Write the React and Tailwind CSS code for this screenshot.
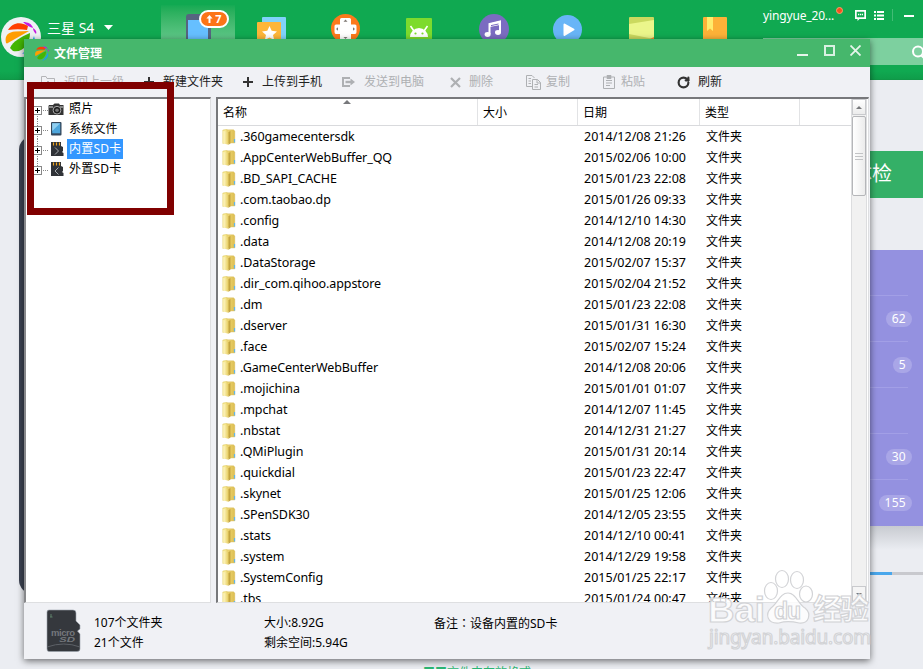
import { RotateCw } from 'lucide-react'

const FILES = [
  ['.360gamecentersdk', '2014/12/08 21:26'],
  ['.AppCenterWebBuffer_QQ', '2015/02/06 10:00'],
  ['.BD_SAPI_CACHE', '2015/01/23 22:08'],
  ['.com.taobao.dp', '2015/01/26 09:33'],
  ['.config', '2014/12/10 14:30'],
  ['.data', '2014/12/08 20:19'],
  ['.DataStorage', '2015/02/07 15:37'],
  ['.dir_com.qihoo.appstore', '2015/02/04 21:52'],
  ['.dm', '2015/01/23 22:08'],
  ['.dserver', '2015/01/31 16:30'],
  ['.face', '2015/02/07 15:24'],
  ['.GameCenterWebBuffer', '2014/12/08 20:06'],
  ['.mojichina', '2015/01/01 01:07'],
  ['.mpchat', '2014/12/07 11:45'],
  ['.nbstat', '2014/12/31 21:27'],
  ['.QMiPlugin', '2015/01/31 20:14'],
  ['.quickdial', '2015/01/23 22:47'],
  ['.skynet', '2015/01/25 12:06'],
  ['.SPenSDK30', '2014/12/05 23:55'],
  ['.stats', '2014/12/10 00:41'],
  ['.system', '2014/12/29 19:58'],
  ['.SystemConfig', '2015/01/25 22:17'],
  ['.tbs', '2015/01/24 00:47'],
]

function Logo({ className }) {
  return (
    <svg className={className} viewBox="0 0 40 40">
      <path d="M7 13 C11 6 19 4 27 9 L26 13 C20 12 14 12 7 13Z" fill="#ff3d00" />
      <path d="M5 26 C3 18 8 15 14 14.500 L28 14 L6 26.500Z" fill="#ff9d00" />
      <path d="M9 31 C12 24 20 20 29 16 C29 27 22 36 12 34Z" fill="#43b604" />
      <path d="M22 5 C27 5 31 7 32 11 C28 10 25 8 22 5Z M32 11 C35 13 36 15 35 17 C33 15 32 13 32 11Z" fill="#c51ae0" />
      <path d="M33 19 C36 27 30 35 21 37 C28 31 31 26 33 19Z" fill="#159cf8" />
    </svg>
  )
}

function Folder() {
  return (
    <svg className="h-4 w-[18px] shrink-0" viewBox="0 0 18 16">
      <defs>
        <linearGradient id="fold" x1="0" x2="1">
          <stop offset="0" stopColor="#fff8c8" />
          <stop offset="1" stopColor="#e6cc5c" />
        </linearGradient>
        <linearGradient id="foldBack" x1="0" x2="1">
          <stop offset="0" stopColor="#f0d977" />
          <stop offset="1" stopColor="#dcbd50" />
        </linearGradient>
      </defs>
      <path d="M.8 1 L5 .3 V13.500 L.8 14.500Z" fill="#f6e78d" stroke="#e0ca68" strokeWidth=".5" />
      <path d="M5 .8 H11.500 L12.800 2 V14 H5Z" fill="url(#foldBack)" stroke="#d8bd5c" strokeWidth=".4" />
      <path d="M1.500 2 L6.500 3 V15.700 L1.500 14.500Z" fill="url(#fold)" />
      <path d="M6.500 3 L8.500 2 V14.500 L6.500 15.700Z" fill="#c3a440" />
      <path d="M12.500 10 V13.500" stroke="#60b6ed" strokeWidth="1.200" />
    </svg>
  )
}

function Phone() {
  return (
    <>
      <svg className="h-[25px] w-[25px]" viewBox="0 0 25 25">
        <rect width="25" height="34" rx="3" fill="#566580" />
        <rect x="2" y="6" width="20" height="24" fill="#66bfff" />
      </svg>
      <span className="absolute left-[38px] top-[5px] flex h-[18px] w-[30px] items-center justify-center gap-[2px] rounded-full border-2 border-white bg-[#fc7418] text-[11px] font-bold text-white">
        <svg className="h-[8px] w-[7px]" viewBox="0 0 7 9"><path d="M3.500 0 L7 4 H4.600 V9 H2.400 V4 H0Z" fill="#fff" /></svg>
        7
      </span>
    </>
  )
}

const TABS = [
  <Phone key="phone" />,
  <svg key="star" className="mr-px h-[22px] w-[29px]" viewBox="0 0 29 22">
    <rect x="5" width="24" height="26" rx="1" fill="#80d2fa" />
    <rect y="5" width="24" height="26" rx="1" fill="#fdb639" />
    <path d="M12.500 9 L14.700 13.800 L20 14.400 L16 18 L17.200 23 L12.500 20.500 L7.800 23 L9 18 L5 14.400 L10.300 13.800Z" fill="#fff" />
  </svg>,
  <svg key="game" className="mr-[2px] h-[25px] w-[29px]" viewBox="0 0 29 25">
    <circle cx="14.500" cy="14.500" r="14.500" fill="#fd7a1b" />
    <path d="M10.500 4 H18.500 Q20 4 20 5.500 V10.500 H24 Q25.500 10.500 25.500 12 V18 Q25.500 20 24 20 H20 V26 H9 V20 H5 Q3.500 20 3.500 18 V12 Q3.500 10.500 5 10.500 H9 V5.500 Q9 4 10.500 4Z" fill="#fff" />
    <path d="M14.500 5.500 L16.500 7.800 H12.500Z M5 15 L7 13.300 V16.700Z M24 15 L22 13.300 V16.700Z M14.500 25 L12.500 23 H16.500Z" fill="#7d7772" />
  </svg>,
  <svg key="android" className="mr-[2px] h-[21px] w-[26px]" viewBox="0 0 26 21">
    <rect width="26" height="28" rx="1" fill="#7ddb2d" />
    <path d="M4 19 A9 9 0 0 1 22 19Z" fill="#fff" />
    <path d="M4.500 8 L8 13 M21.500 8 L18 13" stroke="#fff" strokeWidth="1.600" />
    <circle cx="9.500" cy="15.500" r="1.100" fill="#7ddb2d" /><circle cx="16.500" cy="15.500" r="1.100" fill="#7ddb2d" />
  </svg>,
  <svg key="music" className="h-[25px] w-[30px]" viewBox="0 0 30 25">
    <circle cx="15" cy="15" r="15" fill="#7b6cc1" />
    <path d="M10.500 20 V10 L21 7.500 V18" fill="none" stroke="#fff" strokeWidth="2" />
    <path d="M10.500 9.500 L21 7 V11 L10.500 13Z" fill="#fff" />
    <path d="M12 11.600 L19.500 10" stroke="#7b6cc1" strokeWidth="1" />
    <ellipse cx="8.600" cy="20.500" rx="3" ry="2.400" fill="#fff" /><ellipse cx="19" cy="18.500" rx="3" ry="2.400" fill="#fff" />
  </svg>,
  <svg key="video" className="mr-[2px] h-6 w-[29px]" viewBox="0 0 29 24">
    <circle cx="14.500" cy="14.500" r="14.500" fill="#68b5f7" />
    <path d="M11.500 9.500 L20.500 14.500 L11.500 20Z" fill="#fff" stroke="#fff" strokeWidth="2" strokeLinejoin="round" />
  </svg>,
  <svg key="note" className="mr-[2px] h-[22px] w-[25px]" viewBox="0 0 25 22">
    <rect width="25" height="24" rx="1" fill="#cbd95f" />
    <path d="M0 7 L25 3 V22 L20 21 L0 17Z" fill="#ebf68b" />
    <path d="M21 22 L25 20 V22Z" fill="#ef8b31" />
  </svg>,
  <svg key="book" className="mr-[2px] h-[22px] w-6" viewBox="0 0 24 22">
    <rect width="24" height="26" rx="1" fill="#fdb238" />
    <path d="M4 0 H10 V14 L7 11.500 L4 14Z" fill="#ffec6c" />
  </svg>,
]

function MainHeader() {
  return (
    <header className="relative flex h-20 border-b border-[#109747] bg-linear-to-b from-[#10a951] from-90% to-[#0f9d4a]">
      <div className="flex w-[161px] shrink-0 items-start pt-[17px] pl-px text-white">
        <div className="h-10 w-10 rounded-full bg-[#eef1f4]"><Logo className="h-10 w-10" /></div>
        <span className="ml-[6px] text-[14px] leading-[21px]">三星 S4</span>
        <svg className="mt-2 ml-[10px] h-[5px] w-[9px]" viewBox="0 0 9 5"><path d="M0 0 H9 L4.500 5Z" fill="#fff" /></svg>
      </div>
      {TABS.map((icon, i) => (
        <div
          key={i}
          className={
            i === 0
              ? 'relative mt-[5px] flex h-[34px] w-[74px] shrink-0 items-end justify-center bg-linear-to-b from-[#14aa53] to-[#5ec787]'
              : 'flex h-[39px] w-[74px] shrink-0 items-end justify-center'
          }
        >
          {icon}
        </div>
      ))}
      <div className="absolute top-[6px] left-[763px] flex items-start text-[12px] leading-5 text-white">
        <span className="w-[73px] tracking-[-0.15px]">yingyue_20...</span>
        <span className="mt-px h-[7px] w-[7px] rounded-full border border-[#ff9d6a] bg-[#f4511e]" />
        <svg className="mt-[4px] ml-[12px] h-[11px] w-[11px]" viewBox="0 0 11 11">
          <path d="M0 0 H11 V9 H4.500 L2.500 11 V9 H0Z M1.700 1.700 V7.300 H9.300 V1.700Z" fill="#fff" fillRule="evenodd" />
          <path d="M3 4.500 H8" stroke="#fff" strokeWidth="1.400" strokeDasharray="1.200 .7" />
        </svg>
        <svg className="mt-[5px] ml-2 h-[9px] w-[10px]" viewBox="0 0 10 9">
          <path d="M0 1 H2 M3 1 H10 M0 4.500 H2 M3 4.500 H10 M0 8 H2 M3 8 H10" stroke="#fff" strokeWidth="2" />
        </svg>
        <span className="mt-[3px] ml-2 h-3 w-px bg-[#42bc75]" />
        <span className="mt-[9px] ml-[11px] h-[2px] w-[10px] bg-white" />
      </div>
      <div className="absolute top-[38px] right-0 flex h-[27px] w-[160px] items-center justify-end bg-[#7dd09f]">
        <svg className="h-[14px] w-[11px]" viewBox="0 0 11 14">
          <circle cx="6" cy="6.500" r="5" fill="none" stroke="#fff" strokeWidth="2" />
          <path d="M9 10 L12 13" stroke="#fff" strokeWidth="2" />
        </svg>
      </div>
    </header>
  )
}

const COUNTS = ['', '62', '5', '', '30', '155']

function MainBody() {
  return (
    <main className="flex h-[589px] justify-between overflow-hidden">
      <div className="mt-[56px] ml-[19px] h-[458px] w-[200px] rounded-[14px] bg-[#3c4352]" />
      <div className="mr-auto ml-[204px] self-end text-[12px] leading-3 whitespace-nowrap text-[#2bb673]">
        <span className="relative top-[10px]">■■文件夹存放格式</span>
      </div>
      <aside className="flex w-[103px] flex-col pt-[71px]">
        <div className="h-[47px] bg-[#34b067] pt-[9px] pl-[32px] text-[20px] leading-7 text-white">体检</div>
        <ul className="mt-[52px] bg-[#9491e0] pr-[11px] pb-0 text-[12px] tracking-[0.3px] text-white">
          {COUNTS.map((n, i) => (
            <li key={i} className="flex h-[46px] items-center justify-end">
              <div className={i === 5 ? 'h-full grow' : 'mr-[4px] h-full grow border-b border-[#a29fe6]'} />
              {n && <span className="absolute rounded-full bg-[#a9a6e7] px-[6px] leading-4">{n}</span>}
            </li>
          ))}
        </ul>
        <div className="h-6 bg-linear-to-b from-[#c8cbd1] to-[#ebedf2]" />
        <div className="mt-[22px] flex h-[3px] bg-[#c8c9ce]"><div className="w-[72px] bg-[#49a7ec]" /></div>
      </aside>
    </main>
  )
}

const Plus = () => (
  <svg className="h-[10px] w-[10px]" viewBox="0 0 10 10"><path d="M5 0 V10 M0 5 H10" stroke="#333" strokeWidth="2" /></svg>
)

function Toolbar() {
  return (
    <div className="flex h-[30px] shrink-0 items-center pl-[17px] text-[12px] leading-none text-[#222]">
      <div className="flex w-[102px] shrink-0 items-center text-[#b4b5b8]">
        <span className="w-[23px]">
          <svg className="h-3 w-[14px]" viewBox="0 0 14 12" fill="none" stroke="#b4b5b8"><path d="M4 11.500 H.5 V.5 H5 L6 2.500 H13.500 V11.500 H10 M7 11 V5 M4.500 7.500 L7 5 L9.500 7.500" /></svg>
        </span>
        返回上一级
      </div>
      <div className="flex w-[99px] shrink-0 items-center"><span className="w-5 pl-px"><Plus /></span>新建文件夹</div>
      <div className="flex w-[100px] shrink-0 items-center"><span className="w-5 pl-px"><Plus /></span>上传到手机</div>
      <div className="flex w-[107px] shrink-0 items-center text-[#aeb0b3]">
        <span className="w-[22px]">
          <svg className="h-[10px] w-[13px]" viewBox="0 0 13 10" fill="none" stroke="#aeb0b3"><path d="M8 1 H1 V9 H8" strokeWidth="2" /><path d="M3.500 5 H10" strokeWidth="2.400" /><path d="M8.500 1.500 L13 5 L8.500 8.500Z" fill="#aeb0b3" stroke="none" /></svg>
        </span>
        发送到电脑
      </div>
      <div className="flex w-[77px] shrink-0 items-center text-[#aeb0b3]">
        <span className="w-5 pl-px">
          <svg className="h-[11px] w-[11px]" viewBox="0 0 11 11"><path d="M1 1 L10 10 M10 1 L1 10" stroke="#aeb0b3" strokeWidth="2.200" /></svg>
        </span>
        删除
      </div>
      <div className="flex w-[77px] shrink-0 items-center text-[#aeb0b3]">
        <span className="w-5">
          <svg className="h-[15px] w-[15px]" viewBox="0 0 15 15" fill="none" stroke="#aeb0b3"><path d="M6 11.500 H.5 V.5 H6 L8.500 3 M6.500 4.500 H11.500 L14.500 7.500 V14.500 H6.500Z M11 4.500 V8 H14.500 M2.500 3.500 H5 M2.500 6 H5 M2.500 8.500 H5 M8.500 9.500 H12 M8.500 12 H12" /></svg>
        </span>
        复制
      </div>
      <div className="flex w-[74px] shrink-0 items-center text-[#aeb0b3]">
        <span className="w-[18px]">
          <svg className="h-[14px] w-3" viewBox="0 0 12 14" fill="none" stroke="#aeb0b3"><path d="M3.500 2 H.5 V13.500 H11.500 V2 H8.500 M3 5.500 H9 M3 8 H9 M3 10.500 H7" /><path d="M4 .5 H8 V3.500 H4Z" fill="#aeb0b3" /></svg>
        </span>
        粘贴
      </div>
      <div className="flex shrink-0 items-center"><span className="w-[21px]"><RotateCw className="h-[13px] w-[13px] text-[#333]" strokeWidth={4} /></span>刷新</div>
    </div>
  )
}

function Camera() {
  return (
    <svg className="h-[13px] w-4" viewBox="0 0 16 13">
      <path d="M1 2 H5 L6.500 .5 H11 L12 2 H15.500 V12 H.5 V3Z" fill="#333" />
      <path d="M1 4 H5 M12 4 H15" stroke="#ddd" />
      <circle cx="9" cy="7.200" r="3.900" fill="#1d1d1d" stroke="#aaa" strokeWidth="1" />
      <circle cx="9" cy="7.200" r="1.800" fill="#777" />
    </svg>
  )
}

function Tablet() {
  return (
    <svg className="h-[14px] w-4" viewBox="0 0 16 14">
      <rect x="3" width="10.500" height="13.500" rx="1" fill="#34475b" />
      <rect x="4.200" y="1.300" width="8" height="10" fill="#4da6dc" />
      <path d="M4.200 1.300 H12.200 L4.200 9Z" fill="#90cff0" />
    </svg>
  )
}

function Card({ d }) {
  return (
    <svg className="h-[14px] w-4" viewBox="0 0 16 14">
      <path d="M3 0 H13 V4 L15 5 V9 L14 10 L15.500 11 V14 H3Z" fill="#303338" />
      <path d="M5.500 .5 V3.500 M8.500 .5 V3.500 M11.500 .5 V3.500" stroke="#f3a61c" strokeWidth="1.100" />
      <path d={d} fill="none" stroke="#a5a9ad" strokeWidth="1" />
    </svg>
  )
}

const TREE = [
  { label: '照片', icon: <Camera /> },
  { label: '系统文件', icon: <Tablet /> },
  { label: '内置SD卡', icon: <Card d="M7 5.500 L10.500 9 L7 12.500" />, active: true },
  { label: '外置SD卡', icon: <Card d="M10.500 5.500 L7 9 L10.500 12.500" /> },
]

function Tree() {
  return (
    <ul className="w-[187px] shrink-0 border-t-2 border-r border-b border-l-2 border-t-[#77787b] border-r-[#dedfe1] border-b-[#dedfe1] border-l-[#87888b] bg-white pl-[8px] text-[12px] leading-5 tracking-[0.2px] text-black">
      {TREE.map((t, i) => (
        <li key={t.label} className="flex h-5 items-center">
          <svg className="h-5 w-[14px] shrink-0" viewBox="0 0 14 20" fill="none" shapeRendering="crispEdges">
            {i < TREE.length - 1 && <path d="M3.500 15 V20" stroke="#888" strokeDasharray="1 1" />}
            {i > 0 && <path d="M3.500 0 V7" stroke="#888" strokeDasharray="1 1" />}
            <path d="M9 11.500 H14" stroke="#888" strokeDasharray="1 1" />
            <rect x="-.5" y="7.500" width="8" height="8" fill="#fff" stroke="#888" />
            <path d="M1 11.500 H6 M3.500 9 V14" stroke="#000" />
          </svg>
          <span className="w-[19px] shrink-0">{t.icon}</span>
          <span className={t.active ? 'bg-[#3397ff] px-[2px] text-white' : 'px-[2px]'}>{t.label}</span>
        </li>
      ))}
    </ul>
  )
}

function FileTable() {
  return (
    <div className="flex min-w-0 grow border-t-2 border-r border-b border-l-2 border-t-[#77787b] border-r-[#dedfe1] border-b-[#dedfe1] border-l-[#77787b] bg-white text-[12px] text-black">
      <div className="flex min-w-0 grow flex-col overflow-hidden">
        <div className="relative flex h-[27px] shrink-0 items-center border-b border-[#d9dadd]">
          <svg className="absolute top-px left-[125px] h-[4px] w-[8px]" viewBox="0 0 8 4"><path d="M0 4 L4 0 L8 4Z" fill="#77787b" /></svg>
          <span className="h-full w-[260px] border-r border-[#e2e3e5] pl-[5px] leading-[27px]">名称</span>
          <span className="h-full w-[100px] border-r border-[#e2e3e5] pl-[5px] leading-[27px]">大小</span>
          <span className="h-full w-[122px] border-r border-[#e2e3e5] pl-[5px] leading-[27px]">日期</span>
          <span className="h-full w-[100px] border-r border-[#e2e3e5] pl-[5px] leading-[27px]">类型</span>
        </div>
        {FILES.map(([name, date]) => (
          <div key={name} className="flex h-[21px] shrink-0 items-center pl-[4px] leading-[21px] whitespace-nowrap">
            <Folder />
            <span className="w-[344px] text-[12.5px] tracking-[-0.09px]">{name}</span>
            <span className="w-[122px] text-[12.5px] tracking-[0.02px]">{date}</span>
            <span>文件夹</span>
          </div>
        ))}
      </div>
      <div className="mr-px flex w-4 shrink-0 flex-col border-x border-[#dcdddf] bg-[#f1f1f1]">
        <div className="flex h-4 items-center justify-center border border-[#c9cacd] bg-linear-to-b from-white to-[#ececec]">
          <svg className="h-[3px] w-[6px]" viewBox="0 0 6 3"><path d="M0 3 L3 0 L6 3Z" fill="#77787b" /></svg>
        </div>
        <div className="mt-px flex h-20 flex-col items-center justify-center gap-[2px] rounded-[2px] border border-[#b5b6b9] bg-linear-to-r from-white to-[#ececec]">
          <span className="h-px w-2 bg-[#c2c3c5]" />
          <span className="h-px w-2 bg-[#c2c3c5]" />
          <span className="h-px w-2 bg-[#c2c3c5]" />
        </div>
        <div className="mt-auto flex h-4 items-center justify-center border border-[#c9cacd] bg-[#f5f5f5]">
          <svg className="h-[3px] w-[6px]" viewBox="0 0 6 3"><path d="M0 0 L3 3 L6 0Z" fill="#77787b" /></svg>
        </div>
      </div>
    </div>
  )
}

function StatusBar() {
  return (
    <footer className="flex h-14 shrink-0 pl-[22px] text-[12px] leading-5 text-black">
      <svg className="mt-[6px] h-[44px] w-[36px] shrink-0" viewBox="0 0 36 44">
        <path d="M3 1 H27 Q30 1 30 4 V12 L34 16 V20 L31.500 22 L34 25 V40 Q34 42.500 31 42.500 H3 Q1 42.500 1 40 V3 Q1 1 3 1Z" fill="#35383d" stroke="#9ba3ad" strokeWidth=".6" />
        <path d="M1 38 Q18 32 34 38" fill="none" stroke="#5d6167" />
        <path d="M5 5 V8 M4 8 H6.500" stroke="#5f806b" />
        <text x="5" y="27" fontSize="9.500" fill="#74777c" fontFamily="Liberation Sans, sans-serif" fontWeight="bold" textLength="24">micro</text>
        <text x="13" y="32.500" fontSize="7" fill="#74777c" fontFamily="Liberation Sans, sans-serif" fontWeight="bold" fontStyle="italic" textLength="16" lengthAdjust="spacingAndGlyphs">SD</text>
      </svg>
      <div className="w-[170px] shrink-0 pt-[10px] pl-[12px]"><p>107个文件夹</p><p>21个文件</p></div>
      <div className="w-[170px] shrink-0 pt-[10px] pl-[12px]"><p>大小:8.92G</p><p>剩余空间:5.94G</p></div>
      <div className="pt-[10px] pl-[12px]"><p>备注<span className="font-['Noto_Sans_CJK_TC']">：</span>设备内置的SD卡</p></div>
    </footer>
  )
}

function FileManager() {
  return (
    <section className="absolute top-[39px] left-[24px] flex h-[620px] w-[846px] flex-col bg-[#f0f1f5] shadow-[0_2px_7px_rgba(0,0,0,0.55)]">
      <div className="flex h-7 shrink-0 items-center bg-[#46b76c] pl-[9px] text-white">
        <Logo className="h-[18px] w-[18px]" />
        <h1 className="ml-[3px] pt-[2px] text-[12px] font-bold">文件管理</h1>
        <div className="mr-[9px] ml-auto flex h-full items-center gap-[15px] pb-[5px]">
          <span className="mt-[8px] mr-px h-[2px] w-[11px] bg-[#e6f5eb]" />
          <span className="h-[11px] w-[11px] border-2 border-[#d9f1e2]" />
          <svg className="h-[11px] w-[11px]" viewBox="0 0 11 11"><path d="M.5 .5 L10.500 10.500 M10.500 .5 L.5 10.500" stroke="#e6f5eb" strokeWidth="1.800" /></svg>
        </div>
      </div>
      <Toolbar />
      <div className="flex h-[506px] shrink-0 gap-[5px] pr-px">
        <Tree />
        <FileTable />
      </div>
      <StatusBar />
    </section>
  )
}

function Watermark() {
  return (
    <svg className="absolute top-[565px] left-[700px] h-[90px] w-[180px]" viewBox="0 0 180 90" fill="#fff" fillOpacity=".8" stroke="#d2d3d6" strokeWidth="1.200" fontFamily="Liberation Sans, Noto Sans CJK SC, sans-serif">
      <ellipse cx="71" cy="26" rx="6.500" ry="8.500" />
      <ellipse cx="82" cy="14" rx="6.500" ry="8.500" />
      <ellipse cx="97" cy="15" rx="6.500" ry="8.500" />
      <ellipse cx="106" cy="29" rx="6.500" ry="8" />
      <path d="M88 28 C96 28 98 39 105 43 C112 49 109 59 99 58 C91 56 85 56 79 58 C67 59 65 49 71 43 C78 38 80 28 88 28Z" />
      <text x="8" y="57" fontSize="35" fontWeight="bold" textLength="57" lengthAdjust="spacingAndGlyphs">Bai</text>
      <text x="74" y="54" fontSize="23" fontWeight="bold" textLength="27">du</text>
      <text x="113" y="55" fontSize="29" fontWeight="bold" textLength="56">经验</text>
      <text x="9" y="79" fontSize="19" fontFamily="Noto Sans, sans-serif" textLength="162">jingyan.baidu.com</text>
    </svg>
  )
}

export default function App() {
  return (
    <div className="relative h-[669px] w-[923px] overflow-hidden bg-[#ebedf2] font-['Noto_Sans','Noto_Sans_CJK_SC',sans-serif]">
      <MainHeader />
      <MainBody />
      <FileManager />
      <div className="absolute top-[82px] left-[27px] h-[133px] w-[147px] border-[7px] border-[#800000]" />
      <Watermark />
    </div>
  )
}
